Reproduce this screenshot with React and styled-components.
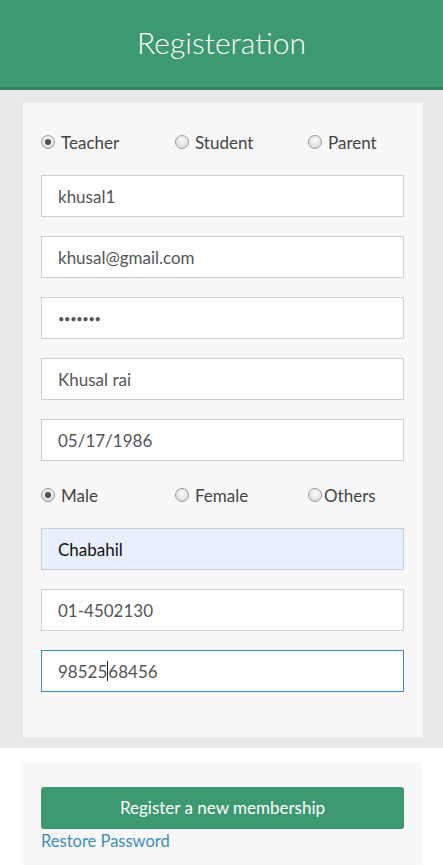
import React from 'react';
import styled, { createGlobalStyle } from 'styled-components';

const GlobalStyle = createGlobalStyle`
  html, body {
    margin: 0;
    padding: 0;
    background: #ffffff;
    font-family: Lato, "Open Sans", sans-serif;
  }
  * { box-sizing: border-box; }
`;

const roles = [
  { label: 'Teacher', checked: true },
  { label: 'Student' },
  { label: 'Parent' },
];

const genders = [
  { label: 'Male', checked: true },
  { label: 'Female' },
  { label: 'Others', tight: true },
];

const App = () => {
  return (
    <Page>
      <GlobalStyle />
      <Header>
        <Title>Registeration</Title>
      </Header>

      <Backdrop>
        <Card>
          <RadioRow>
            {roles.map(r => (
              <RadioItem key={r.label} $tight={r.tight}>
                <RadioDot $checked={r.checked} />
                {r.label}
              </RadioItem>
            ))}
          </RadioRow>

          <Field readOnly value="khusal1" />
          <Field readOnly value="khusal@gmail.com" />
          <Field readOnly value="•••••••" $masked />
          <Field readOnly value="Khusal rai" />
          <Field readOnly value="05/17/1986" />

          <RadioRow>
            {genders.map(g => (
              <RadioItem key={g.label} $tight={g.tight}>
                <RadioDot $checked={g.checked} />
                {g.label}
              </RadioItem>
            ))}
          </RadioRow>

          <Field readOnly value="Chabahil" $autofill />
          <Field readOnly value="01-4502130" />
          <FocusedField>
            98525<Caret />68456
          </FocusedField>
        </Card>
      </Backdrop>

      <Footer>
        <FooterCard>
          <SubmitButton>Register a new membership</SubmitButton>
          <TextLink href="#">Restore Password</TextLink>
        </FooterCard>
      </Footer>
    </Page>
  );
};

export default App;

const Page = styled.div`
  width: 443px;
  height: 865px;
  overflow: hidden;
`

const Header = styled.header`
  height: 90px;
  background: #3d9970;
  border-bottom: 3px solid #357f5d;
  display: flex;
  align-items: center;
  justify-content: center;
`

const Title = styled.h1`
  margin: 0 0 4px 0;
  font-family: Lato, sans-serif;
  font-weight: 300;
  font-size: 30px;
  color: #ffffff;
`

const Backdrop = styled.div`
  background: #e9e9eb;
  padding: 13px 20px 11px 23px;
`

const Card = styled.div`
  background: #f8f8f8;
  padding: 24px 19px 26px 18px;
  display: flex;
  flex-direction: column;
`

const RadioRow = styled.div`
  display: grid;
  grid-template-columns: 134px 133px 1fr;
  height: 30px;
  align-items: center;
  margin-bottom: 18px;
`

const RadioItem = styled.label`
  display: flex;
  align-items: center;
  gap: ${p => (p.$tight ? '2px' : '6px')};
  font-size: 17px;
  color: #444;
`

const RadioDot = styled.span`
  width: 14px;
  height: 14px;
  border-radius: 50%;
  border: 1px solid #9a9a9a;
  background: radial-gradient(circle at 50% 35%, #fbfbfb 0%, #e4e4e4 60%, #cfcfcf 100%);
  position: relative;
  flex-shrink: 0;

  &::after {
    content: '';
    display: ${p => (p.$checked ? 'block' : 'none')};
    position: absolute;
    left: 3px;
    top: 3px;
    width: 6px;
    height: 6px;
    border-radius: 50%;
    background: #505050;
  }
`

const Field = styled.input`
  display: block;
  width: 100%;
  height: 42px;
  margin: 0 0 19px 0;
  padding: 0 16px;
  border: 1px solid ${p => (p.$autofill ? '#c7ccd4' : '#cfcfcf')};
  border-radius: 0;
  background: ${p => (p.$autofill ? '#e8f0fe' : '#ffffff')};
  color: ${p => (p.$autofill ? '#111' : '#555')};
  font-family: Lato, sans-serif;
  font-size: ${p => (p.$masked ? '11px' : '17px')};
  letter-spacing: ${p => (p.$masked ? '-0.3px' : 'normal')};
  outline: none;
`

const FocusedField = styled.div`
  height: 42px;
  margin-bottom: 19px;
  padding: 0 16px;
  border: 1px solid #3c8dbc;
  background: #ffffff;
  color: #555;
  font-size: 17px;
  display: flex;
  align-items: center;
`

const Caret = styled.span`
  display: inline-block;
  width: 1px;
  height: 20px;
  background: #222;
`

const Footer = styled.div`
  background: #ffffff;
  padding: 14px 20px 0 23px;
`

const FooterCard = styled.div`
  background: #f8f8f8;
  padding: 25px 19px 30px 18px;
`

const SubmitButton = styled.button`
  display: block;
  width: 100%;
  height: 42px;
  border: none;
  border-bottom: 1px solid #368a63;
  border-radius: 3px;
  background: #3d9970;
  color: #ffffff;
  font-family: Lato, sans-serif;
  font-size: 17px;
  cursor: pointer;
`

const TextLink = styled.a`
  display: block;
  margin-top: 1px;
  font-size: 16.5px;
  line-height: 22px;
  color: #3c8dbc;
  text-decoration: none;
`
